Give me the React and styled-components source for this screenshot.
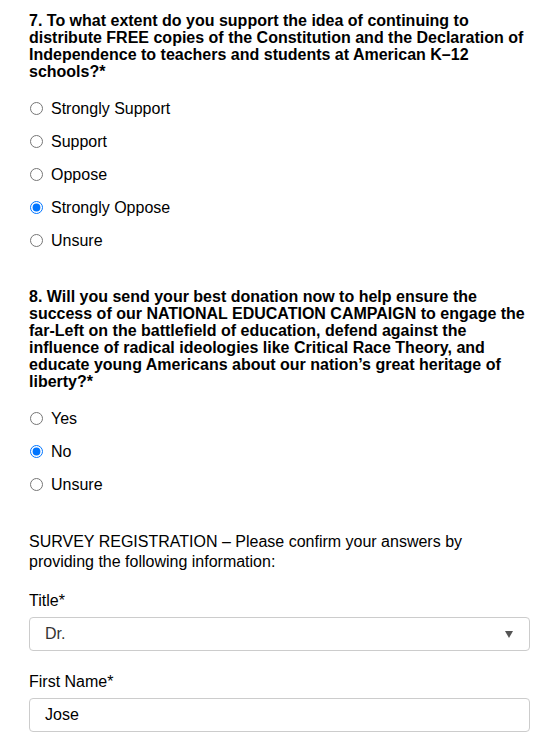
import styled, { createGlobalStyle } from "styled-components";

const GlobalStyle = createGlobalStyle`
    body {
        margin: 0;
        background: #fff;
        font-family: "Liberation Sans", Arial, sans-serif;
        color: #000;
    }
`

const Page = styled.div`
    width: 501px;
    padding: 12px 0 0 29px;
`

const Question = styled.div`
    margin-bottom: 31px;
`

const Heading = styled.div`
    font-size: 16px;
    font-weight: bold;
    line-height: 17px;
    margin-bottom: 12px;
`

const OptionRow = styled.label`
    display: flex;
    align-items: center;
    height: 33px;
    font-size: 16px;
`

const Radio = styled.input`
    width: 13px;
    height: 13px;
    margin: 0 8px 0 1px;
`

const Intro = styled.div`
    font-size: 16px;
    line-height: 20px;
    margin-bottom: 19px;
`

const Field = styled.div`
    margin-bottom: 21px;
`

const FieldLabel = styled.div`
    font-size: 16px;
    line-height: 20px;
    margin-bottom: 6px;
`

const Box = styled.div`
    box-sizing: border-box;
    height: 34px;
    border: 1px solid #ccc;
    border-radius: 4px;
    display: flex;
    align-items: center;
    justify-content: space-between;
    padding: 0 16px 0 15px;
    font-size: 16px;
    color: ${p => p.$muted ? "#333" : "#000"};
`

const Arrow = styled.span`
    width: 0;
    height: 0;
    border-left: 4px solid transparent;
    border-right: 4px solid transparent;
    border-top: 7px solid #555;
`

const RadioGroup = ({ name, options, selected }) => (
    <div>
        {options.map(o => (
            <OptionRow key={o}>
                <Radio type="radio" name={name} checked={o === selected} onChange={() => {}} />
                {o}
            </OptionRow>
        ))}
    </div>
)

const App = () => {
    return (
        <Page>
            <GlobalStyle />
            <Question>
                <Heading>
                    7. To what extent do you support the idea of continuing to distribute FREE copies of the Constitution and the Declaration of Independence to teachers and students at American K–12 schools?*
                </Heading>
                <RadioGroup
                    name="q7"
                    selected="Strongly Oppose"
                    options={["Strongly Support", "Support", "Oppose", "Strongly Oppose", "Unsure"]}
                />
            </Question>
            <Question>
                <Heading>
                    8. Will you send your best donation now to help ensure the success of our NATIONAL EDUCATION CAMPAIGN to engage the far-Left on the battlefield of education, defend against the influence of radical ideologies like Critical Race Theory, and educate young Americans about our nation’s great heritage of liberty?*
                </Heading>
                <RadioGroup name="q8" selected="No" options={["Yes", "No", "Unsure"]} />
            </Question>
            <Intro>
                SURVEY REGISTRATION – Please confirm your answers by providing the following information:
            </Intro>
            <Field>
                <FieldLabel>Title*</FieldLabel>
                <Box $muted>
                    Dr.
                    <Arrow />
                </Box>
            </Field>
            <Field>
                <FieldLabel>First Name*</FieldLabel>
                <Box>Jose</Box>
            </Field>
        </Page>
    )
}

export default App;
